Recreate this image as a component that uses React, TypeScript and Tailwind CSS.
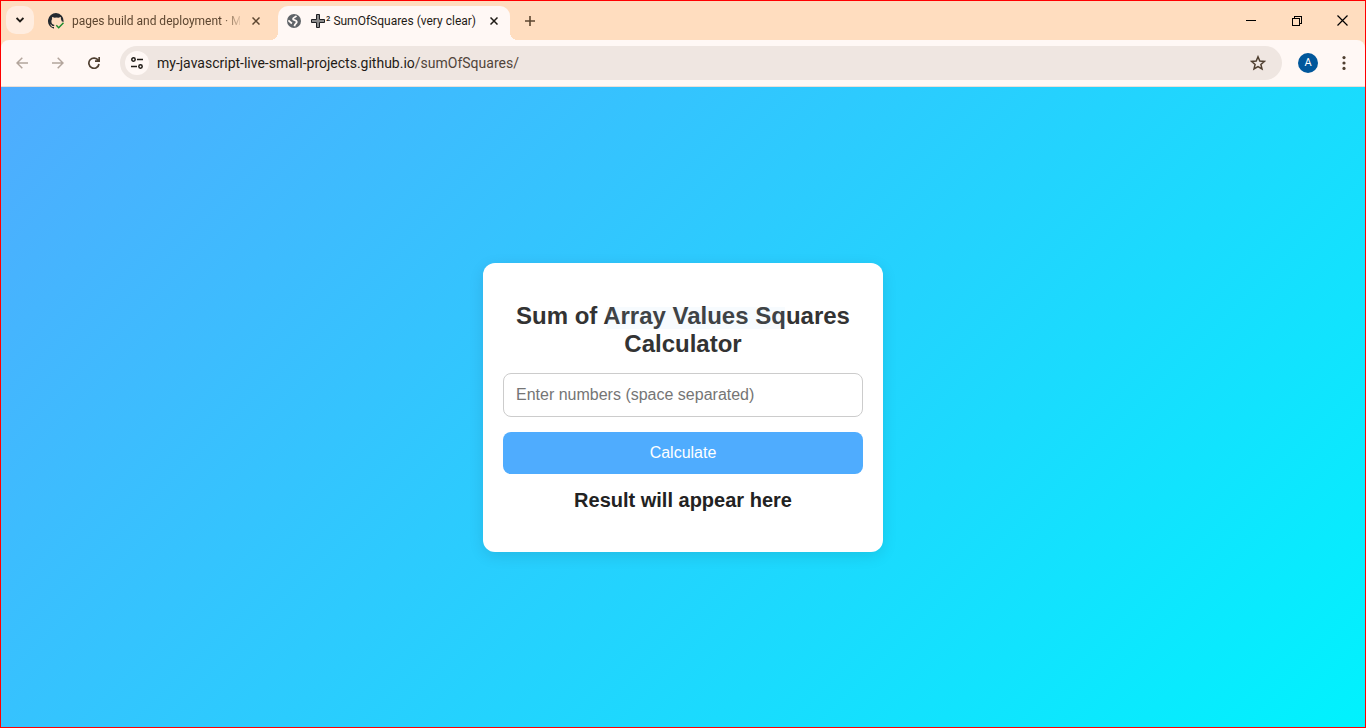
import React, { useState } from "react";

function TabClose({ label }: { label: string }) {
  return (
    <button aria-label={label} className="flex size-4 shrink-0 items-center justify-center">
      <svg width="8" height="8" viewBox="0 0 8 8" stroke="currentColor" strokeWidth="1.5" fill="none">
        <path d="M0.5 0.5 7.5 7.5M7.5 0.5 0.5 7.5" />
      </svg>
    </button>
  );
}

function GithubCheck() {
  return (
    <svg width="16" height="16" viewBox="0 0 16 16" className="shrink-0">
      <path
        fill="#24292f"
        d="M8 0a8 8 0 0 0-2.5 15.6c.4.1.5-.2.5-.4V14c-2 .4-2.600-.500-2.700-.9-.1-.2-.5-.9-.8-1.100-.3-.2-.7-.5 0-.5.6 0 1.100.6 1.200.8.7 1.200 1.900.9 2.300.7.1-.5.3-.9.5-1.100-1.700-.2-3.100-.9-3.100-3.600 0-.9.3-1.600.8-2.200-.1-.2-.4-1 .1-2.100 0 0 .7-.2 2.200.8a7.500 7.500 0 0 1 4 0c1.500-1 2.200-.8 2.200-.8.4 1.100.2 1.900.1 2.100.5.6.8 1.300.8 2.200L15.500 9A8 8 0 0 0 8 0Z"
      />
      <path d="M7.500 9.500h6.500l-3 3.500-3-2Z" fill="#ffddbf" />
      <path d="m8.300 12.200 2.400 2.600L15.500 9.800" fill="none" stroke="#1a8a2c" strokeWidth="1.400" />
    </svg>
  );
}

function Globe() {
  return (
    <svg width="14" height="14" viewBox="0 0 14 14" className="shrink-0">
      <circle cx="7" cy="7" r="7" fill="#5f6368" />
      <path
        fill="none"
        stroke="#fff8f5"
        strokeWidth="1.800"
        d="M9.300 1.800C8.900 3.400 6 3.300 6 5c0 1.500 3.600.8 3.800 2.800.1 1.700-1.800 1.500-2.400 4.400M1.400 6.300 4.900 9.500"
      />
    </svg>
  );
}

export default function App() {
  const [text, setText] = useState("");
  const [result, setResult] = useState("Result will appear here");

  const calculate = () => {
    const values = text.trim().split(/\s+/).map(Number);
    setResult(
      text.trim() === "" || values.some(Number.isNaN)
        ? "Please enter valid numbers"
        : `Sum of squares: ${values.reduce((sum, n) => sum + n * n, 0)}`,
    );
  };

  return (
    <div className="flex min-h-screen flex-col border border-[#ff0000] bg-[#ffddbf] font-[Roboto,sans-serif] text-[#1f1b16]">
      <header className="flex h-[39px] pl-[5px]">
        <button aria-label="Search tabs" className="mt-[5px] flex size-7 items-center justify-center rounded-[10px] bg-[#ffede0]">
          <svg width="8" height="6" viewBox="0 0 8 6" fill="none" stroke="currentColor" strokeWidth="1.8">
            <path d="m0.600 1 3.400 3.400L7.400 1" />
          </svg>
        </button>

        <div className="flex w-[244px] items-center pr-[14px] pl-[14px] text-[#5d4630]">
          <GithubCheck />
          <span className="ml-2 w-[168px] text-xs whitespace-nowrap [mask-image:linear-gradient(to_right,black_150px,transparent_172px)]">
            pages build and deployment · M
          </span>
          <span className="ml-auto flex">
            <TabClose label="Close pages build and deployment" />
          </span>
        </div>

        <div className="flex items-end">
          <div className="-ml-2 size-2 bg-[radial-gradient(circle_at_0_0,transparent_8px,#fff8f5_8px)]" />
          <div className="flex h-[34px] w-[232px] items-center rounded-t-[10px] bg-[#fff8f5] pr-2 pb-1 pl-[9px]">
            <Globe />
            <span className="ml-[10px] flex items-center text-xs whitespace-nowrap">
              <svg width="14" height="14" viewBox="0 0 14 14" className="mr-px">
                <path d="M5.500.5h3v5h5v3h-5v5h-3v-5h-5v-3h5Z" fill="#8b8b8b" stroke="#202124" />
              </svg>
              ² SumOfSquares (very clear)
            </span>
            <span className="ml-auto flex">
              <TabClose label="Close SumOfSquares" />
            </span>
          </div>
          <div className="size-2 bg-[radial-gradient(circle_at_100%_0,transparent_8px,#fff8f5_8px)]" />
        </div>

        <button aria-label="New tab" className="ml-1 flex w-4 items-center justify-center text-[#5d4630]">
          <svg width="10" height="10" viewBox="0 0 10 10" stroke="currentColor" strokeWidth="1.600">
            <path d="M5 0v10M0 5h10" />
          </svg>
        </button>

        <div className="ml-auto flex">
          <button aria-label="Minimize" className="flex w-[46px] items-center justify-center">
            <svg width="10" height="10" viewBox="0 0 10 10" stroke="#000" shapeRendering="crispEdges"><path d="M0 4.500h10" /></svg>
          </button>
          <button aria-label="Restore" className="flex w-[46px] items-center justify-center">
            <svg width="10" height="10" viewBox="0 0 10 10" stroke="#000" fill="none" shapeRendering="crispEdges">
              <path d="M.5 2.500h7v7h-7ZM2.500 2.500v-2h7v7h-2" />
            </svg>
          </button>
          <button aria-label="Close window" className="flex w-[45px] items-center justify-center">
            <svg width="11" height="11" viewBox="0 0 11 11" stroke="#000" strokeWidth="1.200"><path d="m.5.5 10 10M10.500.5l-10 10" /></svg>
          </button>
        </div>
      </header>

      <nav className="flex h-[47px] items-center rounded-t-lg border-b border-[#eadfd8] bg-[#fff8f5] pr-[11px] pl-[15px]">
        <button aria-label="Back" className="text-[#b3a59c]">
          <svg width="12" height="12" viewBox="0 0 12 12" fill="none" stroke="currentColor" strokeWidth="1.500"><path d="M12 6H1M6.300.7 1 6l5.300 5.300" /></svg>
        </button>
        <button aria-label="Forward" className="ml-6 text-[#b3a59c]">
          <svg width="12" height="12" viewBox="0 0 12 12" fill="none" stroke="currentColor" strokeWidth="1.500"><path d="M0 6h11M5.700.7 11 6l-5.300 5.300" /></svg>
        </button>
        <button aria-label="Reload" className="ml-6 text-[#4f3f30]">
          <svg width="12" height="12" viewBox="0 0 12 12" fill="none" stroke="currentColor" strokeWidth="1.700"><path d="M10.300 3.500A5.100 5.100 0 1 0 11 7M11.200 0v4.200H7" /></svg>
        </button>
        <div className="ml-5 flex h-[34px] flex-1 items-center rounded-full bg-[#efe6e1] pr-4 pl-[5px]">
          <button aria-label="View site information" className="flex size-6 items-center justify-center rounded-full bg-[#fff8f5]">
            <svg width="12" height="12" viewBox="0 0 12 12" fill="none" stroke="#1f1b16" strokeWidth="1.500">
              <circle cx="2.500" cy="2.500" r="1.700" />
              <path d="M6 2.500h6M0 9.500h6" />
              <circle cx="9.500" cy="9.500" r="1.700" />
            </svg>
          </button>
          <a href="#sum" className="ml-2 text-sm whitespace-nowrap">
            my-javascript-live-small-projects.github.io<span className="text-[#51443a]">/sumOfSquares/</span>
          </a>
          <button aria-label="Bookmark this tab" className="ml-auto">
            <svg width="16" height="16" viewBox="0 0 16 16" fill="none" stroke="#4f3f30" strokeWidth="1.500">
              <path d="m8 1.800 1.800 4.200 4.600.4-3.500 3 1.100 4.500L8 11.500l-4 2.400 1.100-4.500-3.500-3L6.200 6Z" />
            </svg>
          </button>
        </div>
        <button aria-label="Profile" className="ml-4 flex size-5 items-center justify-center rounded-full bg-[#01579b] text-[11px] text-white">A</button>
        <button aria-label="Menu" className="ml-4 flex w-5 justify-center">
          <svg width="4" height="14" viewBox="0 0 4 14" fill="#4f3f30"><circle cx="2" cy="1.600" r="1.600" /><circle cx="2" cy="7" r="1.600" /><circle cx="2" cy="12.400" r="1.600" /></svg>
        </button>
      </nav>

      <main id="sum" className="flex flex-1 items-center justify-center bg-[linear-gradient(135deg,#4facfe,#00f2fe)] font-['Liberation_Sans',Arial,sans-serif]">
        <section className="w-full max-w-[400px] rounded-xl bg-white px-5 pt-[39px] pb-10 text-center shadow-[0_4px_15px_rgba(0,0,0,0.1)]">
          <h2 className="relative text-2xl leading-7 font-bold text-[#333]">
            Sum of Array Values Squares Calculator
            <span className="pointer-events-none absolute top-[5px] left-[104px] h-[22px] w-[178px] bg-[#b0dcfa]/10" />
          </h2>
          <input
            aria-label="Numbers"
            placeholder="Enter numbers (space separated)"
            value={text}
            onChange={(event) => setText(event.target.value)}
            className="mt-[15px] block h-11 w-full rounded-lg border border-[#ccc] px-3 text-base placeholder:text-[#757575]"
          />
          <button onClick={calculate} className="mt-[15px] block h-[42px] w-full rounded-lg bg-[#4facfe] text-base text-white">
            Calculate
          </button>
          <p className="mt-[15px] text-xl leading-[23px] font-bold text-[#222]">{result}</p>
        </section>
      </main>
    </div>
  );
}
